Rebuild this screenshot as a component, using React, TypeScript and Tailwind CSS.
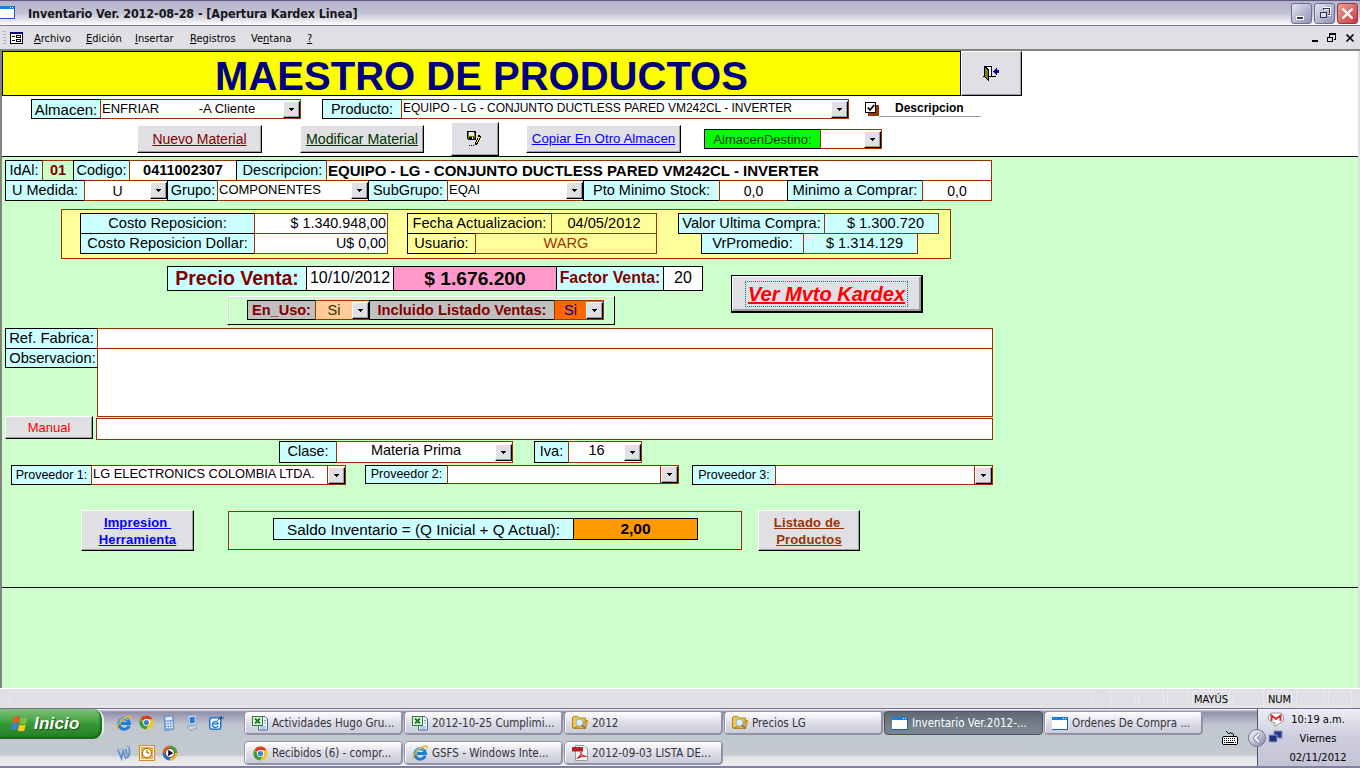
import type { ReactNode } from "react";

type BoxProps = { className?: string; children?: ReactNode };

function Arrow() {
  return (
    <span className="flex h-[17px] w-[17px] shrink-0 items-center justify-center border border-t-white border-l-white border-r-black border-b-black bg-[#e0dfe3] shadow-[inset_-1px_-1px_0_#9d9da1]">
      <svg width="5" height="3" viewBox="0 0 5 3" shapeRendering="crispEdges">
        <path d="M0 0h5v1H4v1H3v1H2V2H1V1H0z" fill="#000" />
      </svg>
    </span>
  );
}

function Cell({ className = "", children }: BoxProps) {
  return (
    <div className={`flex shrink-0 items-center whitespace-pre border leading-none ${className}`}>
      {children}
    </div>
  );
}

function Label({ className = "", tone = "bg-[#ccffff]", children }: BoxProps & { tone?: string }) {
  return <Cell className={`justify-center border-black ${tone} ${className}`}>{children}</Cell>;
}

function Field({ className = "", edge = "border-[#993300]", children }: BoxProps & { edge?: string }) {
  return <Cell className={`relative -ml-px ${edge} ${className}`}>{children}</Cell>;
}

function Combo({ className = "", text = "", textClass = "" }: { className?: string; text?: string; textClass?: string }) {
  return (
    <Field className={className}>
      <span className={`grow overflow-hidden ${textClass}`}>{text}</span>
      <Arrow />
    </Field>
  );
}

function Push({ className = "", children }: BoxProps) {
  return (
    <button
      className={`flex shrink-0 items-center justify-center whitespace-pre border border-t-white border-l-white border-r-black border-b-black bg-[#e0dfe3] leading-none shadow-[inset_-1px_-1px_0_#9d9da1] ${className}`}
    >
      {children}
    </button>
  );
}

function WindowIcon() {
  return (
    <svg width="16" height="13" viewBox="0 0 16 13" shapeRendering="crispEdges">
      <path d="M0 0h16v13H0z" fill="#1b5fc4" />
      <path d="M0 0h15v3H0z" fill="#1181ea" />
      <path d="M0 3h15v9H0z" fill="#fff" />
      <path d="M11 1h1v1h-1zM13 1h1v1h-1z" fill="#fff" />
    </svg>
  );
}

function FormIcon() {
  return (
    <svg width="13" height="12" viewBox="0 0 13 12" shapeRendering="crispEdges">
      <path d="M0 0h13v12H0z" fill="#000" />
      <path d="M0 0h13v2H0z" fill="#000080" />
      <path d="M1 2h11v9H1z" fill="#fff" />
      <path d="M2 4h3v1H2zM2 8h3v1H2zM6 3h5v3H6zM6 7h5v3H6z" fill="#000" />
      <path d="M7 4h3v1H7zM7 8h3v1H7z" fill="#fff" />
    </svg>
  );
}

function DoorIcon() {
  return (
    <svg width="17" height="16" viewBox="0 0 17 16" shapeRendering="crispEdges">
      <path d="M1 0h8v10h4v1H0v-1h1z" fill="#000" />
      <path d="M3 1h5v9H3z" fill="#fff" />
      <path d="M1 0h2v1h1v1h1v1h1v12H5v-1H4v-1H3v-1H2v-1H1z" fill="#000" />
      <path d="M2 2h1v1h1v1h1v9H4v-1H3v-1H2z" fill="#808000" />
      <path d="M10 5h1V4h1V3h1V2h1v2h2v3h-2v2h-1V8h-1V7h-1V6h-1z" fill="#000080" />
    </svg>
  );
}

function SaveEditIcon() {
  return (
    <svg width="16" height="16" viewBox="0 0 16 16" shapeRendering="crispEdges">
      <path d="M0 0h9v9H1V8H0z" fill="#000" />
      <path d="M1 1h1v7H1zM7 2h1v6H7zM1 5h7v1H1z" fill="#808000" />
      <path d="M2 1h5v4H2z" fill="#e6e6e6" />
      <path d="M5 6h1v2H5z" fill="#fff" />
      <path d="M11 4h2v1h1v2h-1v2h-1v2h-1v2h-1v1H8v-3h1V9h1V7h1z" fill="#000" />
      <path d="M11 6h1v1h1v-1h-1v3h-1v2h-1v1H9v-1h1V9h1z" fill="#ffff00" />
      <path d="M2 14h1v1H2zM4 14h1v1H4zM6 14h1v1H6z" fill="#000" />
    </svg>
  );
}

function IeIcon() {
  return (
    <svg width="16" height="16" viewBox="0 0 16 16">
      <path d="M13.200 10.800A5.300 5.300 0 1 1 13.500 8.500H5" fill="none" stroke="#1c7fd6" strokeWidth="3" />
      <path d="M3.500 7a5 5 0 0 1 8.500-2" fill="none" stroke="#74c6f5" strokeWidth="1.200" />
      <path d="M1.300 14.500C-.6 11.500 8 1.800 13 1c2.400-.3 2.400 1.500 1.500 3" fill="none" stroke="#efb21c" strokeWidth="1.400" />
    </svg>
  );
}

function ChromeIcon() {
  return (
    <svg width="15" height="15" viewBox="0 0 16 16">
      <circle cx="8" cy="8" r="7.500" fill="#f3c81e" />
      <path d="M8 8L1.500 4.200A7.500 7.500 0 0 1 14.600 4.500H8z" fill="#d93a2b" />
      <path d="M1.500 4.200A7.500 7.500 0 0 0 7.300 15.500L10.500 10 5 9z" fill="#3c9a43" />
      <circle cx="8" cy="8" r="3.700" fill="#fff" />
      <circle cx="8" cy="8" r="2.800" fill="#3f7fd0" />
    </svg>
  );
}

function CalcIcon() {
  return (
    <svg width="14" height="16" viewBox="0 0 14 16">
      <path d="M2 1l9-1 1 14-9 2z" fill="#7ea8e0" stroke="#5b81bd" strokeWidth=".7" />
      <path d="M3.500 2.500l6.500-.8.2 3-6.500.8z" fill="#e6f2ff" />
      <path d="M4 7.500h6.500M4.200 10h6.500M4.400 12.500H11" stroke="#fff" strokeWidth="1.400" strokeDasharray="1.500 1" />
    </svg>
  );
}

function PcIcon() {
  return (
    <svg width="14" height="16" viewBox="0 0 14 16">
      <path d="M3 1l8-1v9l-7 1z" fill="#e5edf8" stroke="#8ba3c7" strokeWidth=".7" />
      <path d="M4.500 2.200l5.300-.7v6.300l-4.800.7z" fill="#2d7ad8" />
      <path d="M2 12l7-2 3 3-7 2.500z" fill="#c3d2e8" stroke="#6e88b0" strokeWidth=".6" />
    </svg>
  );
}

function MailEIcon() {
  return (
    <svg width="16" height="16" viewBox="0 0 16 16">
      <rect x="1" y="2" width="12.500" height="13" rx="3" fill="#2375c8" />
      <rect x="2.500" y="3.500" width="9.500" height="10" rx="1.500" fill="#f4faff" />
      <path d="M10 10.800A3 3 0 1 1 10.200 8.800H5" fill="none" stroke="#2375c8" strokeWidth="1.300" />
      <path d="M8.500 6.500l5-5M13 1v4M11 3h5" stroke="#1c4e8c" strokeWidth="1" />
    </svg>
  );
}

function ClipIcon() {
  return (
    <svg width="16" height="16" viewBox="0 0 16 16" fill="none" stroke="#5f8fc9">
      <path d="M2 5l3.500 8.500L7 6l2.500 7c4-1 4.500-6 3.500-10.500M9.500 4l1.500 6" strokeWidth="1.700" />
      <path d="M1 4h4M10 2l4-1" strokeWidth="1.200" stroke="#88b1e2" />
    </svg>
  );
}

function ClockIcon() {
  return (
    <svg width="16" height="16" viewBox="0 0 16 16">
      <rect x=".5" y=".5" width="15" height="15" fill="#fff3d6" stroke="#d78b23" />
      <rect x="2" y="2" width="12" height="12" fill="#f0b050" />
      <circle cx="8" cy="8" r="4.600" fill="#fff" stroke="#a8640f" />
      <path d="M8 5v3h2.500" fill="none" stroke="#7a4a0d" />
    </svg>
  );
}

function MediaIcon() {
  return (
    <svg width="16" height="16" viewBox="0 0 16 16">
      <path d="M8 .5A7.500 7.500 0 0 1 15.500 8H8z" fill="#4aa53c" />
      <path d="M15.500 8A7.500 7.500 0 0 1 8 15.500V8z" fill="#f2b721" />
      <path d="M8 15.500A7.500 7.500 0 0 1 .5 8H8z" fill="#2c6fc7" />
      <path d="M.5 8A7.500 7.500 0 0 1 8 .5V8z" fill="#e4622a" />
      <circle cx="8" cy="8" r="4.500" fill="#fff" stroke="#333" strokeWidth=".8" />
      <path d="M6.200 4.800L11.200 8l-5 3.200z" fill="#111" />
    </svg>
  );
}

function ExcelIcon() {
  return (
    <svg width="16" height="16" viewBox="0 0 16 16">
      <path d="M6.500 1.500H13l2.500 2.500v11h-9z" fill="#f3f7fd" stroke="#4a6a9e" />
      <path d="M12 5.500h2M12 8h2M8 12h6M8 14h6" stroke="#7a9bd0" />
      <rect x=".5" y="1.500" width="10" height="9" fill="#e7f5e4" stroke="#2b7a33" />
      <path d="M3 3.500l5 5M8 3.500l-5 5" stroke="#1c7a2a" strokeWidth="1.800" />
    </svg>
  );
}

function FolderIcon() {
  return (
    <svg width="16" height="14" viewBox="0 0 16 14">
      <path d="M.5 12V2l1-1.500h4L7 2h6.500v10z" fill="#f0c64c" stroke="#a87a14" strokeWidth=".9" />
      <path d="M14 4.500h1.700L13.500 12.500H2z" fill="#e3a92c" stroke="#a87a14" strokeWidth=".7" />
      <circle cx="7.500" cy="6.500" r="3.500" fill="#d9efff" stroke="#8ab0cf" />
      <path d="M10 9l3.500 3.500" stroke="#777" strokeWidth="1.600" />
    </svg>
  );
}

function PdfIcon() {
  return (
    <svg width="16" height="16" viewBox="0 0 16 16">
      <path d="M3.500.5H12l3.500 3.500v11.500h-12z" fill="#f6f6f8" stroke="#9a9aa0" />
      <path d="M0 2h11v4.500H0z" fill="#b8212a" />
      <path d="M5 13.500c3-2 4.500-5 4-6.500-1.300 0 1 4.500 5 4.500-1.500-1.500-7 .5-9 2z" fill="none" stroke="#c8202a" strokeWidth="1.100" />
    </svg>
  );
}

function TaskButton({ icon, text, active = false }: { icon: ReactNode; text: string; active?: boolean }) {
  const skin = active
    ? "border-[#4a525c] bg-linear-to-b from-[#5e6872] via-[#727d88] to-[#7c8690] text-white"
    : "border-[#9595a8] bg-linear-to-b from-white via-[#dddde8] to-[#cacad8] text-[#333338] shadow-[inset_1px_1px_0_#fff,inset_-1px_-1px_0_#8e8ea2]";
  return (
    <button className={`flex h-6 w-[159px] shrink-0 items-center gap-1 whitespace-pre rounded-sm border pl-[7px] text-[11.500px] leading-none ${skin}`}>
      <span className="flex w-4 shrink-0 justify-center">{icon}</span>
      <span className="pt-px">{text}</span>
    </button>
  );
}

function WindowFrame() {
  return (
    <>
      <header className="flex h-[26px] shrink-0 items-center border-t border-b border-t-[#5f5a80] border-b-[#757599] bg-linear-to-b from-[#b4b2ca] via-[#c3c3d3] to-[#fcfcfd] pr-[2px]">
        <span className="-ml-px -mt-[1px] w-[18px]"><WindowIcon /></span>
        <h1 className="ml-[11px] grow whitespace-pre pt-[2px] text-[12.500px] leading-none font-bold tracking-[-0.100px] text-[#16161c]">
          Inventario Ver. 2012-08-28 - [Apertura Kardex Linea]
        </h1>
        <div className="flex gap-[2px]">
          <span className="flex size-[21px] items-end rounded-[3px] border border-[#6d6f96] bg-linear-to-br from-[#e5e5f1] to-[#9092b6] pb-[3px] pl-1">
            <span className="h-[4px] w-2 border border-white bg-[#33334e]" />
          </span>
          <span className="flex size-[21px] items-center justify-center rounded-[3px] border border-[#6d6f96] bg-linear-to-br from-[#e5e5f1] to-[#9092b6]">
            <svg width="12" height="12" viewBox="0 0 12 12" fill="none" shapeRendering="crispEdges">
              <path d="M4 1h7v6H9" stroke="#fff" strokeWidth="3" />
              <path d="M4 3V1.500h6.500V7H9" stroke="#33334e" />
              <path d="M1.500 5h6v5.500h-6z" stroke="#33334e" fill="#dcdcea" />
            </svg>
          </span>
          <span className="flex size-[21px] items-center justify-center rounded-[3px] border border-[#8e3a48] bg-linear-to-br from-[#eb9d94] to-[#c4383f]">
            <svg width="13" height="13" viewBox="0 0 13 13" fill="none">
              <path d="M1.500 1.500l10 10M11.500 1.500l-10 10" stroke="#fff" strokeWidth="2.300" />
            </svg>
          </span>
        </div>
      </header>
      <nav className="flex h-[25px] shrink-0 items-center border-b-2 border-b-[#84847e] bg-[#e0dfe3] text-[11px] leading-none text-black">
        <span className="ml-[3px] mr-1 h-[13px] w-[3px] bg-[repeating-linear-gradient(to_bottom,#b3b2b8_0_1px,transparent_1px_3px)]" />
        <FormIcon />
        <div className="ml-[11px] flex grow pt-[2px]">
          <span className="w-[52px]"><u>A</u>rchivo</span>
          <span className="w-[49px]"><u>E</u>dición</span>
          <span className="w-[55px]"><u>I</u>nsertar</span>
          <span className="w-[61px]"><u>R</u>egistros</span>
          <span className="w-[56px]">Ve<u>n</u>tana</span>
          <span><u>?</u></span>
        </div>
        <svg className="mr-[5px]" width="44" height="10" viewBox="0 0 44 10" fill="none" stroke="#000" shapeRendering="crispEdges">
          <path d="M1 8h6" strokeWidth="2" />
          <path d="M18.500 4V1M24.500 1v5M18 1h7M23 6.500h2" strokeWidth="1" />
          <path d="M18 1h7" strokeWidth="2" />
          <path d="M16.500 4.500h5v4h-5zM16 4h6" />
          <path d="M35.500 1.500l7 7M42.500 1.500l-7 7" strokeWidth="1.700" shapeRendering="auto" />
        </svg>
      </nav>
    </>
  );
}

function FormHeader() {
  return (
    <section className="h-[106px] shrink-0 border-b border-black bg-white">
      <div className="flex h-[45px]">
        <h2 className="flex w-[959px] items-center justify-center border border-black bg-[#ffff00] pt-[5px] text-[40px] leading-none font-bold tracking-[0.010px] text-[#000080]">
          MAESTRO DE PRODUCTOS
        </h2>
        <Push className="w-[61px]"><DoorIcon /></Push>
      </div>
      <div className="mt-[3px] flex h-5 pl-[29px]">
        <Label className="w-[70px] text-[15px]">Almacen:</Label>
        <Combo className="w-[201px] pl-px text-[13px]" text="ENFRIAR           -A Cliente" textClass="pb-[2px]" />
        <Label className="ml-[21px] w-20 text-[14.500px]">Producto:</Label>
        <Combo className="w-[448px] pl-px text-[12px]" text="EQUIPO - LG - CONJUNTO DUCTLESS PARED VM242CL - INVERTER" textClass="pb-[2px]" />
        <span className="ml-4 mt-[3px] flex size-[11px] items-center justify-center border border-black bg-white shadow-[3px_3px_0_#993300]">
          <svg width="8" height="8" viewBox="0 0 8 8" fill="none"><path d="M.8 3.500L3 6l4.300-5" stroke="#000" strokeWidth="1.800" /></svg>
        </span>
        <span className="ml-[3px] h-[18px] w-[102px] border-b border-[#9d9da1] pl-[16px] pt-[3px] text-[12px] leading-none font-bold">Descripcion</span>
      </div>
      <div className="mt-[3px] flex h-[34px] items-center pl-[135px] text-[14px]">
        <Push className="h-[28px] w-[125px] text-[#800000] underline">Nuevo Material</Push>
        <Push className="ml-[38px] h-[28px] w-[124px] text-[14.200px] text-[#003300] underline">Modificar Material</Push>
        <Push className="ml-[27px] h-[34px] w-[48px]"><SaveEditIcon /></Push>
        <Push className="ml-[27px] h-[28px] w-[155px] text-[13.300px] text-[#0000ff] underline">Copiar En Otro Almacen</Push>
        <Label className="ml-[23px] h-5 w-[117px] text-[13px] text-[#003300]" tone="bg-[#00ff00]">AlmacenDestino:</Label>
        <Combo className="h-5 w-[62px] bg-white" />
      </div>
    </section>
  );
}

function ProductRows() {
  return (
    <div className="mt-[3px] pl-[3px] text-[14.500px]">
      <div className="flex h-[21px]">
        <Label className="w-[38px]">IdAl:</Label>
        <Field className="w-8 justify-center font-bold text-[#800000]">01</Field>
        <Label className="relative -ml-px w-[57px]">Codigo:</Label>
        <Field className="w-[108px] justify-center bg-white font-bold">0411002307</Field>
        <Label className="relative -ml-px w-[91px] pl-[2px]">Descripcion:</Label>
        <Field className="w-[666px] bg-white pl-px text-[15px] font-bold">EQUIPO - LG - CONJUNTO DUCTLESS PARED VM242CL - INVERTER</Field>
      </div>
      <div className="relative -mt-px flex h-[21px]">
        <Label className="w-20">U Medida:</Label>
        <Combo className="w-[84px] bg-white" text="U" textClass="text-center text-[14px]" />
        <Label className="relative -ml-px w-[51px] pl-px">Grupo:</Label>
        <Combo className="w-[152px] bg-white" text="COMPONENTES" textClass="text-[13px] pb-[2px] pl-px" />
        <Label className="relative -ml-px w-20">SubGrupo:</Label>
        <Combo className="w-[137px] bg-white" text="EQAI" textClass="text-[13px] pb-[2px] pl-px" />
        <Label className="relative -ml-px w-[137px]">Pto Minimo Stock:</Label>
        <Field className="w-[69px] justify-center bg-white text-[14px]">0,0</Field>
        <Label className="relative -ml-px w-[136px] text-[14.700px]">Minimo a Comprar:</Label>
        <Field className="w-[70px] justify-center bg-white text-[14px]">0,0</Field>
      </div>
    </div>
  );
}

function CostPanel() {
  return (
    <div className="mt-2 ml-[59px] flex h-[50px] w-[890px] border border-[#993300] bg-[#ffff99] pt-[3px] pl-[18px] text-[14.600px]">
      <div className="w-[308px]">
        <div className="flex h-[21px]">
          <Label className="w-[175px]">Costo Reposicion:</Label>
          <Field className="w-[134px] justify-end bg-white pr-px text-[14.300px]">$ 1.340.948,00</Field>
        </div>
        <div className="relative -mt-px flex h-[21px]">
          <Label className="w-[175px]">Costo Reposicion Dollar:</Label>
          <Field className="w-[134px] justify-end bg-white pr-px text-[14.300px]">U$ 0,00</Field>
        </div>
      </div>
      <div className="ml-[19px] w-[250px]">
        <div className="flex h-[21px]">
          <Label className="w-[145px]" tone="bg-transparent">Fecha Actualizacion:</Label>
          <Field className="w-[106px] justify-center">04/05/2012</Field>
        </div>
        <div className="relative -mt-px flex h-[21px]">
          <Label className="w-[69px]" tone="bg-transparent">Usuario:</Label>
          <Field className="w-[182px] justify-center text-[#993300]">WARG</Field>
        </div>
      </div>
      <div className="ml-[21px]">
        <div className="flex h-[21px]">
          <Label className="w-[147px]">Valor Ultima Compra:</Label>
          <Field className="w-[115px] justify-center bg-[#ccffff] pl-[8px]">$ 1.300.720</Field>
        </div>
        <div className="relative -mt-px ml-[23px] flex h-[21px]">
          <Label className="w-[103px]">VrPromedio:</Label>
          <Field className="w-[115px] justify-center bg-[#ccffff] pl-[8px]">$ 1.314.129</Field>
        </div>
      </div>
    </div>
  );
}

function PriceRows() {
  return (
    <div className="mt-[7px] flex h-[59px] pl-[165px]">
      <div className="w-[537px]">
        <div className="flex h-[25px]">
          <Label className="w-[140px] text-[19.500px] font-bold text-[#800000]">Precio Venta:</Label>
          <Field className="w-[88px] justify-center bg-white pb-[2px] text-[16px]" edge="border-black">10/10/2012</Field>
          <Field className="w-[164px] justify-center bg-[#ff99cc] text-[19.200px] font-bold" edge="border-black">$ 1.676.200</Field>
          <Label className="relative -ml-px w-[108px] pb-[2px] text-[15.900px] font-bold text-[#800000]">Factor Venta:</Label>
          <Field className="w-10 justify-center bg-white pb-[2px] text-[16px]" edge="border-black">20</Field>
        </div>
        <div className="mt-[5px] ml-[60px] flex h-[29px] w-[388px] border border-t-white border-l-white border-r-black border-b-black pt-[3px] pl-[19px] shadow-[inset_1px_1px_0_#e0dfe3]">
          <Label className="h-5 w-[69px] text-[14.500px] font-bold text-[#800000]" tone="bg-[#c0c0c0]">En_Uso:</Label>
          <Combo className="h-5 w-[55px] bg-[#ffcc99] text-[14.500px] text-[#333300]" text="Si" textClass="text-center" />
          <Label className="relative -ml-px h-5 w-[186px] text-[14.700px] font-bold text-[#800000]" tone="bg-[#c0c0c0]">Incluido Listado Ventas:</Label>
          <Combo className="h-5 w-[50px] bg-[#ff6600] text-[14.500px] text-[#000080]" text="Si" textClass="text-center" />
        </div>
      </div>
      <Push className="ml-[27px] mt-[9px] h-[38px] w-[192px] border-r-2 border-b-2 border-t-black! border-l-black! text-[20px] font-bold text-[#ff0000] italic shadow-[inset_1px_1px_0_#fff,inset_-2px_-2px_0_#9d9da1]!">
        <span className="border border-dotted border-[#008080] px-[2px] py-[2px] underline">Ver Mvto Kardex</span>
      </Push>
    </div>
  );
}

function ReferenceRows() {
  return (
    <div className="mt-[3px] pl-[3px] text-[14.500px]">
      <div className="flex h-[21px]">
        <Label className="w-[93px] pb-px text-[14.800px]">Ref. Fabrica:</Label>
        <Field className="w-[896px] bg-white" />
      </div>
      <div className="relative -mt-px flex h-[69px] items-start">
        <Label className="h-5 w-[93px] pl-[2px] text-[14.700px]">Observacion:</Label>
        <Field className="h-[69px] w-[896px] bg-white" />
      </div>
      <div className="relative -mt-px flex h-6 items-end">
        <Push className="mb-px h-[23px] w-[88px] text-[13px] text-[#ff0000]">Manual</Push>
        <Field className="ml-[3px]! h-[22px] w-[897px] bg-white" />
      </div>
      <div className="mt-px flex h-[22px] pl-[274px]">
        <Label className="w-[58px] pb-[2px]">Clase:</Label>
        <Combo className="w-[177px] bg-white" text="Materia Prima" textClass="text-center pb-[3px]" />
        <Label className="ml-[21px] w-[35px] pb-[2px]">Iva:</Label>
        <Combo className="w-[74px] bg-white" text="16" textClass="text-center pb-[3px]" />
      </div>
      <div className="mt-[2px] flex h-5 pl-[6px] text-[12.500px]">
        <Label className="w-[81px]">Proveedor 1:</Label>
        <Combo className="w-[255px] bg-white" text="LG ELECTRONICS COLOMBIA LTDA." textClass="border-r border-[#993300] pl-px h-full pt-[2px] text-[12.850px]" />
        <Label className="ml-[19px] h-[19px] w-[83px]">Proveedor 2:</Label>
        <Combo className="h-[19px] w-[232px] bg-white" textClass="h-full border-r border-[#993300]" />
        <Label className="ml-[13px] w-[84px]">Proveedor 3:</Label>
        <Combo className="w-[218px] bg-white" textClass="h-full border-r border-[#993300]" />
      </div>
    </div>
  );
}

function BalanceRow() {
  return (
    <div className="mt-[25px] flex h-[42px] pl-[79px]">
      <Push className="h-[41px] w-[113px] text-[13px] font-bold tracking-[0.150px] text-[#0000ff]">
        <span className="text-center leading-[17px] underline">{"Impresion \nHerramienta"}</span>
      </Push>
      <div className="mt-px ml-[34px] flex h-[39px] w-[514px] border border-[#993300] pt-[6px] pl-11">
        <Label className="h-[22px] w-[301px] pt-px text-[15.300px]">Saldo Inventario = (Q Inicial + Q Actual):</Label>
        <Field className="h-[22px] w-[125px] justify-center bg-[#ff9900] text-[15.500px] font-bold" edge="border-black">2,00</Field>
      </div>
      <Push className="ml-4 h-[41px] w-[102px] text-[13px] font-bold tracking-[0.150px] text-[#993300]">
        <span className="text-center leading-[17px] underline">{"Listado de \nProductos"}</span>
      </Push>
    </div>
  );
}

function StatusBar() {
  return (
    <div className="flex h-5 shrink-0 items-start border-t border-white bg-[#e0dfe3] pt-[2px] pl-[9px] text-[11px] leading-none">
      <span className="h-4 w-[1083px] border border-[#e8e7ea]" />
      <span className="ml-[18px] h-4 w-[25px] border border-[#ebeaec]" />
      <span className="ml-[3px] h-4 w-[26px] border border-[#ebeaec]" />
      <span className="ml-[3px] h-4 w-[22px] border border-[#ebeaec]" />
      <span className="ml-[3px] flex h-4 w-[38px] items-center justify-center border border-[#ebeaec]">MAYÚS</span>
      <span className="ml-[3px] h-4 w-[31px] border border-[#ebeaec]" />
      <span className="ml-[3px] flex h-4 w-[25px] items-center justify-center border border-[#ebeaec]">NUM</span>
      <span className="ml-1 h-4 w-[29px] border border-[#ebeaec]" />
      <span className="ml-[3px] h-4 w-[24px] border border-[#ebeaec]" />
    </div>
  );
}

function Taskbar() {
  return (
    <footer className="flex h-[60px] shrink-0 border-t border-b-2 border-t-[#73739a] border-b-[#8080a0] bg-[linear-gradient(to_bottom,#fff_0,#8f8fa9_3px,#a9a9bd_9px,#c0c6cf_16px,#c4cad0_46px,#e2e3e5_48px,#eeeeee_57px)]">
      <button className="flex h-[30px] w-[104px] shrink-0 items-center rounded-r-[10px] border-r-2 border-r-[#e7f0e4] bg-linear-to-b from-[#7fc27a] via-[#359b34] to-[#237b25] pl-[11px] shadow-[inset_-2px_-2px_2px_#1c6a1d]">
        <svg width="18" height="18" viewBox="0 0 18 18">
          <path d="M3 2c2-1 4-1 6 0L7.500 8c-2-1-4-1-6 0z" fill="#ec5a24" />
          <path d="M10 2.500c2 1 4 1 6.500 0L15 8.500c-2 1-4.500 1-6.500 0z" fill="#7fc242" />
          <path d="M1.300 9c2-1 4-1 6 0L5.800 15c-2-1-4-1-6 0z" fill="#3c7fe0" />
          <path d="M8.300 9.500c2 1 4 1 6.500 0L13.300 15.500c-2 1-4.500 1-6.500 0z" fill="#fbc91b" />
        </svg>
        <span className="ml-[5px] pb-px font-['Liberation_Sans',Arial,sans-serif] text-[17px] leading-none font-bold tracking-[0.200px] text-white italic [text-shadow:1px_1px_1px_#1b4f1b]">Inicio</span>
      </button>
      <div className="ml-[12px] mt-[6px] grid h-[48px] w-[128px] grid-cols-[23px_23px_23px_23px_23px] grid-rows-[16px_16px] gap-y-[14px]">
        <IeIcon />
        <ChromeIcon />
        <CalcIcon />
        <PcIcon />
        <MailEIcon />
        <ClipIcon />
        <ClockIcon />
        <MediaIcon />
      </div>
      <div className="mt-[2px] grid h-[54px] grid-cols-[repeat(6,160px)] grid-rows-[24px_24px] gap-y-[6px]">
        <TaskButton icon={<ExcelIcon />} text="Actividades Hugo Gru..." />
        <TaskButton icon={<ExcelIcon />} text="2012-10-25 Cumplimi..." />
        <TaskButton icon={<FolderIcon />} text="2012" />
        <TaskButton icon={<FolderIcon />} text="Precios LG" />
        <TaskButton icon={<WindowIcon />} text="Inventario Ver.2012-..." active />
        <TaskButton icon={<WindowIcon />} text="Ordenes De Compra ..." />
        <TaskButton icon={<ChromeIcon />} text="Recibidos (6) - compr..." />
        <TaskButton icon={<IeIcon />} text="GSFS - Windows Inte..." />
        <TaskButton icon={<PdfIcon />} text="2012-09-03 LISTA DE..." />
      </div>
      <svg className="mt-[22px] ml-[18px] shrink-0" width="16" height="15" viewBox="0 0 16 15" shapeRendering="crispEdges">
        <path d="M4 0h1v1h1v1H5V1H4zM6 2h2v1H6zM8 1h1v1H8zM9 2h2v1H9zM11 3h1v2h-1zM1 5h14v1H1zM1 13h14v1H1zM0 6h1v7H0zM15 6h1v7h-1z" fill="#000" />
        <path d="M1 6h14v7H1z" fill="#fff" />
        <path d="M2 7.500h12M2 9.500h12" stroke="#000" strokeDasharray="1 1" />
        <path d="M2 11h1v1H2zM4 11h8v1H4zM13 11h1v1h-1z" fill="#000" />
      </svg>
      <div className="ml-[19px] flex grow border-l border-[#55556e] bg-linear-to-b from-[#eeeef6] via-[#cdcddd] to-[#c3c3d5]">
        <span className="relative -ml-[10px] mt-[20px] flex size-[18px] shrink-0 items-center justify-center rounded-full border border-[#777791] bg-linear-to-br from-white to-[#8585a5]">
          <svg width="8" height="10" viewBox="0 0 8 10" fill="none">
            <path d="M6 1L2 5l4 4" stroke="#77779a" strokeWidth="3.400" />
            <path d="M6 1L2 5l4 4" stroke="#fff" strokeWidth="2" />
          </svg>
        </span>
        <div className="ml-[2px] mt-[3px] flex w-4 shrink-0 flex-col gap-[3px]">
          <svg width="16" height="15" viewBox="0 0 16 15">
            <path d="M3 1h10l2.500 3v5L12 11 7 14.500V11L3 10 .5 7V4z" fill="#fff" stroke="#99999f" />
            <path d="M3.500 9V3.500L8 7l4.500-3.500V9" fill="none" stroke="#d9302c" strokeWidth="2" />
          </svg>
          <svg width="16" height="16" viewBox="0 0 16 16">
            <path d="M6 1h8v7H6z" fill="#26388e" stroke="#8b95bd" />
            <path d="M1 5h8v7H1z" fill="#1f2f7e" stroke="#97a1c7" />
            <path d="M3 13h7v2H3zM11 9h4v2h-4z" fill="#c4c9dd" />
          </svg>
        </div>
        <div className="flex grow flex-col items-center gap-[8px] pt-[5px] pr-[8px] text-[11px] leading-[11px] text-black">
          <span>10:19 a.m.</span>
          <span>Viernes</span>
          <span>02/11/2012</span>
        </div>
      </div>
    </footer>
  );
}

export default function App() {
  return (
    <div className="flex h-[768px] w-[1360px] flex-col overflow-hidden bg-[#e0dfe3] font-['DejaVu_Sans_Condensed','Noto_Sans',sans-serif] text-black">
      <WindowFrame />
      <main className="flex h-[637px] w-[1358px] shrink-0 flex-col border-l-2 border-[#84847e] bg-[#ccffcc] font-['Liberation_Sans',Arial,sans-serif]">
        <FormHeader />
        <section className="h-[431px] shrink-0 border-b border-black">
          <ProductRows />
          <CostPanel />
          <PriceRows />
          <ReferenceRows />
          <BalanceRow />
        </section>
      </main>
      <StatusBar />
      <Taskbar />
    </div>
  );
}
